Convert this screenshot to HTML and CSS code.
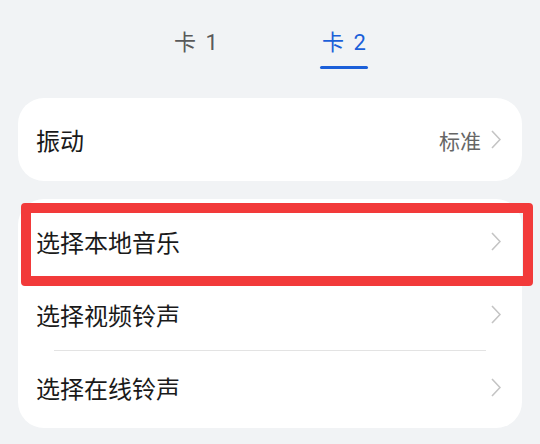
FILE: index.html
```html
<!DOCTYPE html>
<html lang="zh-CN">

<head>
	<meta charset="UTF-8">
	<meta name="viewport" content="width=device-width, initial-scale=1.0">
	<title>铃声</title>
	<link rel="stylesheet" href="styles.css">
</head>

<body>
	<div class="tabs">
		<div class="tab">卡 1</div>
		<div class="tab active">卡 2</div>
	</div>

	<div class="group">
		<div class="row">
			<span class="label">振动</span>
			<span class="value">标准</span>
			<svg class="chevron" viewBox="0 0 10 19"><polyline points="1,1 9,9.5 1,18" /></svg>
		</div>
	</div>

	<div class="group list">
		<div class="row">
			<span class="label">选择本地音乐</span>
			<svg class="chevron" viewBox="0 0 10 19"><polyline points="1,1 9,9.5 1,18" /></svg>
		</div>
		<div class="row">
			<span class="label">选择视频铃声</span>
			<svg class="chevron" viewBox="0 0 10 19"><polyline points="1,1 9,9.5 1,18" /></svg>
		</div>
		<div class="row divided">
			<span class="label">选择在线铃声</span>
			<svg class="chevron" viewBox="0 0 10 19"><polyline points="1,1 9,9.5 1,18" /></svg>
		</div>
		<div class="highlight"></div>
	</div>
</body>

</html>
```

FILE: styles.css
```css
body {
	margin: 0;
	background: #f1f3f5;
	font-family: "Noto Sans CJK SC", "Noto Sans", sans-serif;
	color: #1a1a1a;
}

.tabs {
	display: flex;
	justify-content: center;
	gap: 48px;
	padding-top: 28px;
}

.tab {
	width: 100px;
	text-align: center;
	font-family: Roboto, "Noto Sans CJK SC", sans-serif;
	font-size: 22px;
	line-height: 30px;
	word-spacing: 4px;
	color: #595959;
}

.tab.active {
	color: #1b5fd9;
}

.tab.active::after {
	content: "";
	display: block;
	width: 48px;
	height: 3px;
	margin: 8px auto 0;
	border-radius: 2px;
	background: #1b5fd9;
}

.tab:not(.active) {
	padding-bottom: 11px;
}

.group {
	margin: 29px 18px 0;
	background: #fff;
	border-radius: 26px;
}

.group .row {
	height: 83px;
}

.group.list {
	position: relative;
	margin-top: 18px;
	padding: 6px 0 4px;
}

.group.list .row {
	height: 73px;
}

.row {
	display: flex;
	align-items: center;
	padding: 0 21px 0 18px;
	position: relative;
}

.row.divided::before {
	content: "";
	position: absolute;
	top: -1px;
	left: 36px;
	right: 36px;
	height: 1px;
	background: #e3e3e3;
}

.label {
	flex: 1;
	font-size: 24px;
}

.value {
	font-size: 21px;
	color: #666;
	margin-right: 10px;
}

.chevron {
	width: 10px;
	height: 19px;
	fill: none;
	stroke: #c4c4c4;
	stroke-width: 1.6;
}

.highlight {
	position: absolute;
	top: 4px;
	left: 3px;
	right: -11px;
	height: 63px;
	border: 10px solid #f23a3a;
	border-radius: 4px;
}
```
